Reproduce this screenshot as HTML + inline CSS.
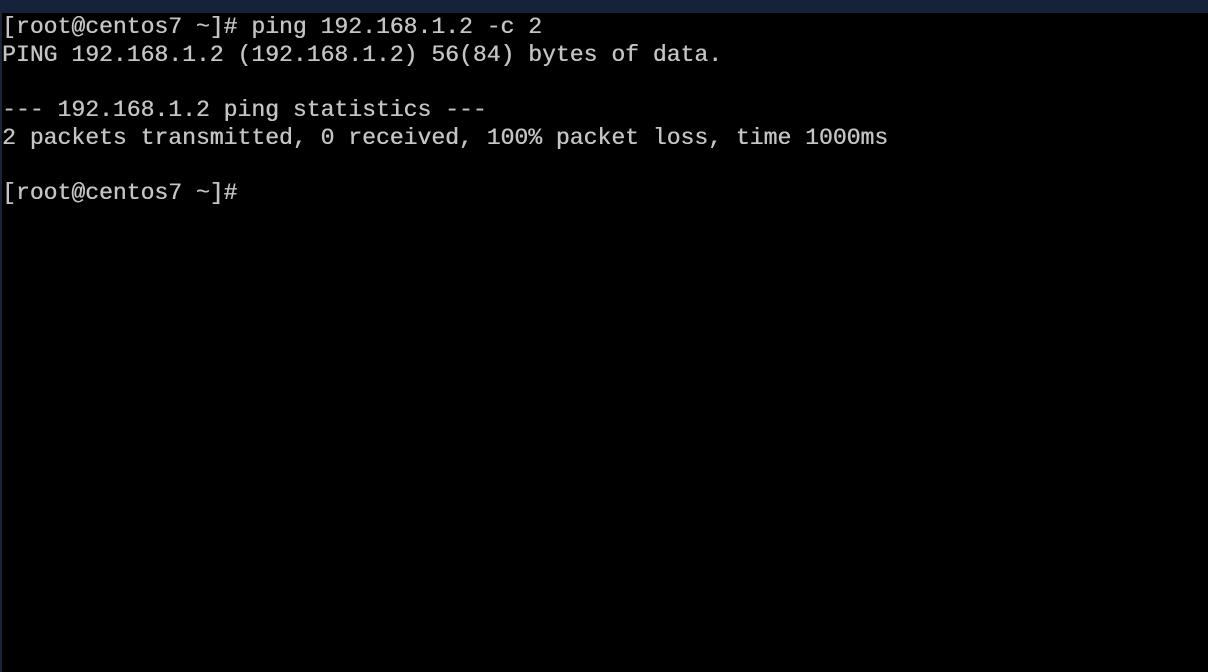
<!DOCTYPE html>
<html><head><style>
html,body{margin:0;padding:0;background:#000;width:1208px;height:672px;overflow:hidden}
.bar{position:absolute;left:0;top:0;width:1208px;height:13px;background:#16223a}
.edge{position:absolute;left:0;top:13px;width:2px;height:659px;background:#1a2538}
pre{position:absolute;left:2px;top:14px;margin:0;font-family:"Liberation Mono",monospace;font-size:23.2px;line-height:27.7px;color:#c4c4c4;letter-spacing:0;transform:scaleX(0.995);transform-origin:left;text-shadow:0.4px 0 0 #c4c4c4}
</style></head><body>
<div class="bar"></div><div class="edge"></div>
<pre>[root@centos7 ~]# ping 192.168.1.2 -c 2
PING 192.168.1.2 (192.168.1.2) 56(84) bytes of data.

--- 192.168.1.2 ping statistics ---
2 packets transmitted, 0 received, 100% packet loss, time 1000ms

[root@centos7 ~]# </pre>
</body></html>
